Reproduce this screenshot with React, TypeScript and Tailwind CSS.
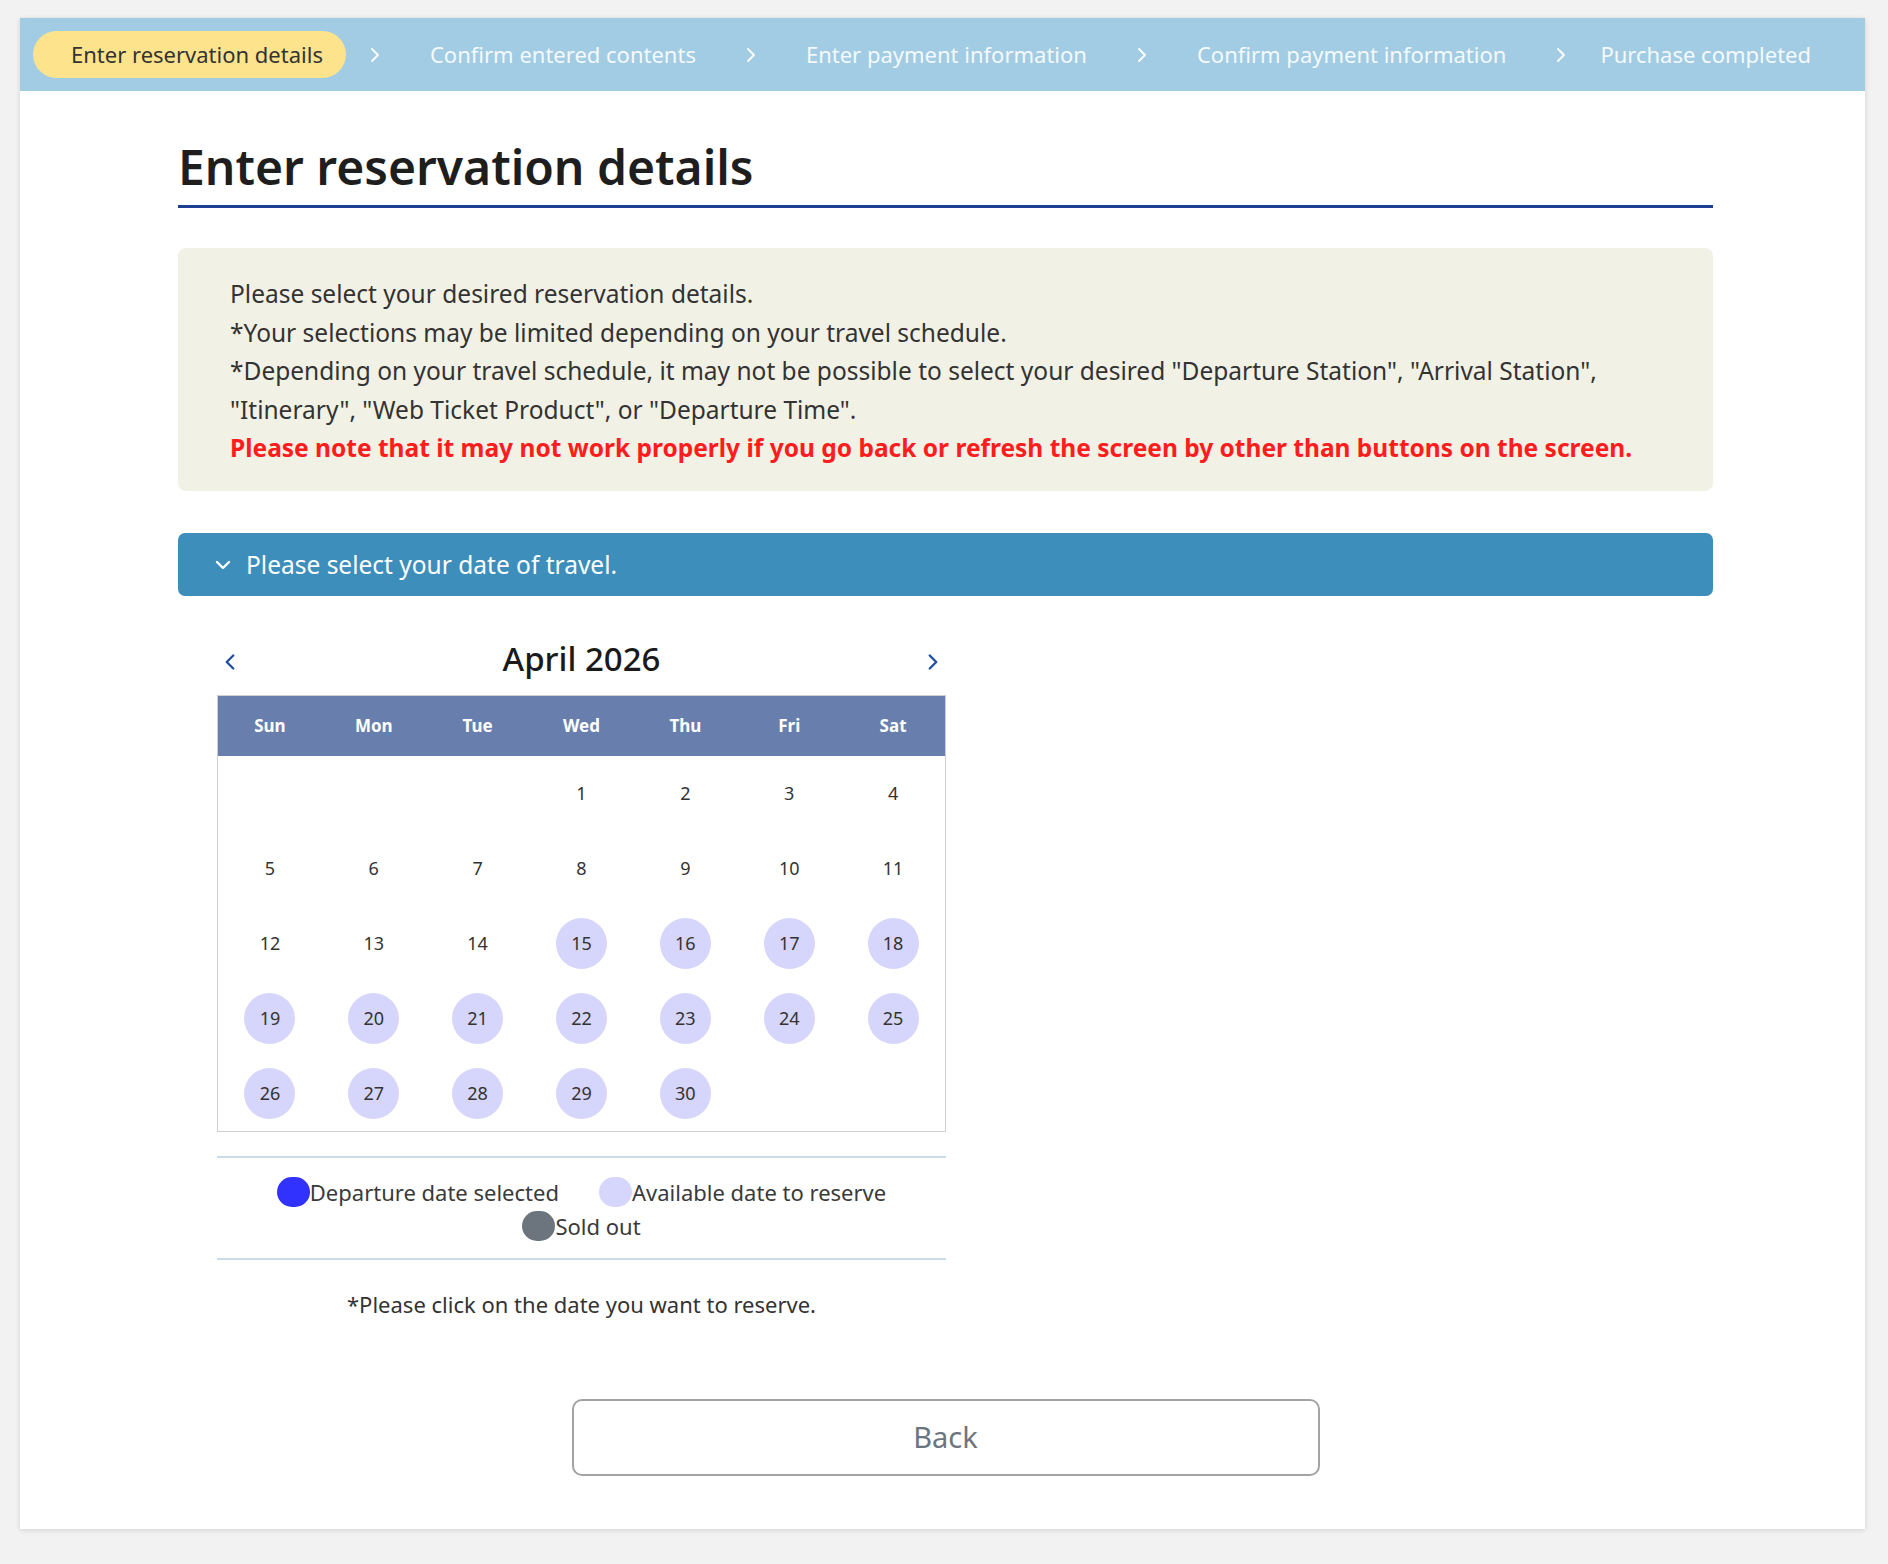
import { ChevronDown, ChevronLeft, ChevronRight } from 'lucide-react';

const STEPS = [
    'Enter reservation details',
    'Confirm entered contents',
    'Enter payment information',
    'Confirm payment information',
    'Purchase completed',
];

const WEEKDAYS = ['Sun', 'Mon', 'Tue', 'Wed', 'Thu', 'Fri', 'Sat'];

// April 2026 starts on a Wednesday
const CELLS: (number | null)[] = [
    null,
    null,
    null,
    ...Array.from({ length: 30 }, (_, i) => i + 1),
    null,
    null,
];

function StepChevron() {
    return (
        <svg width="10" height="16" viewBox="0 0 10 16" className="flex-none">
            <polyline points="2,2 8,8 2,14" fill="none" stroke="#ffffff" strokeWidth="1.8" strokeLinecap="round" strokeLinejoin="round" />
        </svg>
    );
}

function Stepper() {
    return (
        <div className="flex h-[73px] items-center bg-[#a2cce3] pl-[13px]">
            <div className="flex h-[47px] items-center rounded-full bg-[#fde38b] pl-[38px] pr-[23px] text-[22px] text-[#333]">
                {STEPS[0]}
            </div>
            {STEPS.slice(1).map((s, i) => (
                <div key={s} className="flex items-center">
                    <div className={i === 0 ? 'ml-[24px]' : 'ml-[26px]'}>
                        <StepChevron />
                    </div>
                    <span className={i === 3 ? 'ml-[34px] text-[22px] text-[#f4f9fc]' : 'ml-[50px] mr-[24px] text-[22px] text-[#f4f9fc]'}>
                        {s}
                    </span>
                </div>
            ))}
        </div>
    );
}

function DayCell({ day }: { day: number | null }) {
    if (day === null) return <div className="h-[75px]" />;
    const available = day >= 15;
    return (
        <div className="flex h-[75px] items-center justify-center">
            <div
                className={
                    available
                        ? 'flex h-[51px] w-[51px] items-center justify-center rounded-full bg-[#d6d5fb] text-[18px] text-[#333]'
                        : 'flex h-[51px] w-[51px] items-center justify-center text-[18px] text-[#333]'
                }
            >
                {day}
            </div>
        </div>
    );
}

function Calendar() {
    return (
        <div className="ml-[39px] w-[729px]">
            <div className="mt-[38px] flex h-[50px] items-center justify-between">
                <ChevronLeft size={26} strokeWidth={2.2} className="mt-[6px] text-[#1f4f9e]" />
                <span className="text-[33px] font-medium text-[#1a1a1a]">April 2026</span>
                <ChevronRight size={26} strokeWidth={2.2} className="mt-[6px] text-[#1f4f9e]" />
            </div>

            <div className="mt-[11px] border border-[#cfcfcf]">
                <div className="grid h-[60px] grid-cols-7 items-center bg-[#687fae]">
                    {WEEKDAYS.map((d) => (
                        <div key={d} className="text-center text-[17px] font-bold text-white">
                            {d}
                        </div>
                    ))}
                </div>
                <div className="grid grid-cols-7">
                    {CELLS.map((d, i) => (
                        <DayCell key={i} day={d} />
                    ))}
                </div>
            </div>

            <div className="mt-[24px] flex flex-wrap justify-center gap-x-[40px] border-y-2 border-[#c9dde9] pb-[15px] pt-[17px] text-[22px] leading-[34px] text-[#3a3a3a]">
                <div className="flex items-center">
                    <span className="h-[30px] w-[33px] rounded-full bg-[#3232ff]" />
                    <span>Departure date selected</span>
                </div>
                <div className="flex items-center">
                    <span className="h-[30px] w-[33px] rounded-full bg-[#d6d5fb]" />
                    <span>Available date to reserve</span>
                </div>
                <div className="flex items-center">
                    <span className="h-[30px] w-[33px] rounded-full bg-[#6c757d]" />
                    <span>Sold out</span>
                </div>
            </div>

            <p className="mt-[27px] text-center text-[22px] leading-[34px] text-[#333]">
                *Please click on the date you want to reserve.
            </p>
        </div>
    );
}

export default function App() {
    return (
        <div className="min-h-[1564px] bg-[#f2f2f2] pb-[35px] pl-[20px] pr-[23px] pt-[18px] font-['Noto_Sans',sans-serif]">
            <div className="bg-white pb-[53px] shadow-[0_1px_5px_rgba(0,0,0,0.14)]">
                <Stepper />

                <div className="mx-auto w-[1535px] translate-x-[3px]">
                    <h1 className="mt-[46px] border-b-[3px] border-[#1b3f93] pb-[8px] text-[48px] font-semibold leading-[60px] text-[#1e1e1e]">
                        Enter reservation details
                    </h1>

                    <div className="mt-[40px] rounded-[8px] bg-[#f2f1e6] pb-[23px] pl-[52px] pr-[30px] pt-[27px] text-[24.5px] leading-[38.5px] text-[#333]">
                        <p>Please select your desired reservation details.</p>
                        <p>*Your selections may be limited depending on your travel schedule.</p>
                        <p>
                            *Depending on your travel schedule, it may not be possible to select your desired "Departure Station", "Arrival Station",
                            <br />
                            "Itinerary", "Web Ticket Product", or "Departure Time".
                        </p>
                        <p className="font-bold text-[#ff1c1c]">
                            Please note that it may not work properly if you go back or refresh the screen by other than buttons on the screen.
                        </p>
                    </div>

                    <div className="mt-[42px] flex h-[63px] items-center rounded-[7px] bg-[#3d8ebb] pl-[33px] pt-[2px] text-[24.5px] text-white">
                        <ChevronDown size={24} strokeWidth={2.4} />
                        <span className="ml-[11px]">Please select your date of travel.</span>
                    </div>

                    <Calendar />

                    <div className="mt-[78px] flex justify-center">
                        <button
                            type="button"
                            className="flex h-[77px] w-[748px] items-center justify-center rounded-[10px] border-2 border-[#a3a3a3] bg-white text-[29px] text-[#6c757d]"
                        >
                            Back
                        </button>
                    </div>
                </div>
            </div>
        </div>
    );
}
